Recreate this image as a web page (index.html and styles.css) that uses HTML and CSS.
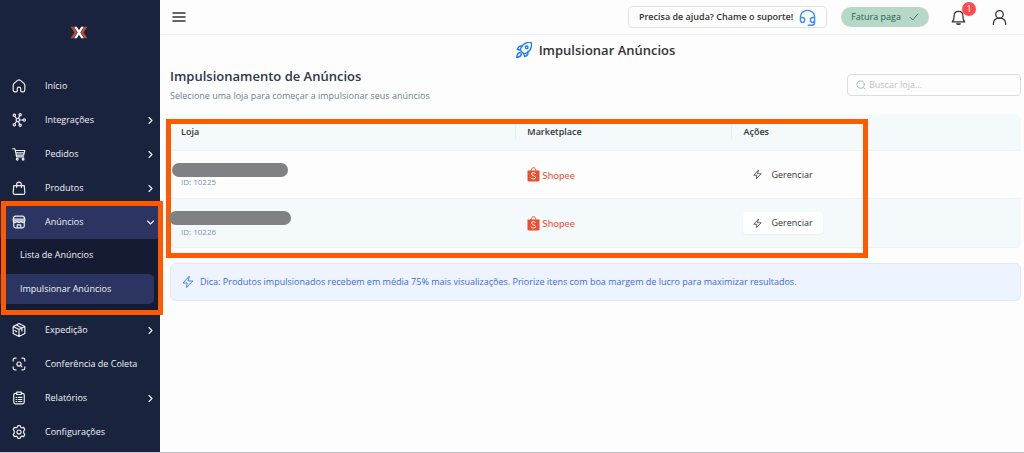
FILE: index.html
```html
<!DOCTYPE html>
<html lang="pt-BR">
<head>
    <meta charset="UTF-8">
    <meta name="viewport" content="width=device-width, initial-scale=1.0">
    <title>Impulsionar Anúncios</title>
    <link rel="stylesheet" href="styles.css">
</head>
<body>
    <!-- Shared icons -->
    <svg class="sprite" aria-hidden="true">
        <symbol id="chevron" viewBox="0 0 24 24"><path d="m8 4 8 8-8 8"/></symbol>
        <symbol id="zap" viewBox="0 0 24 24"><path d="M14 1 2 14h8l-1 9 13-13h-9z"/></symbol>
        <symbol id="shopee" viewBox="0 0 26 30">
            <path d="M8 8c0-9 10-9 10 0" fill="none" stroke="#ee4d2d" stroke-width="2"/>
            <path d="M1 7h24v20q0 2-3 2H4q-3 0-3-2z" fill="#ee4d2d" stroke="none"/>
            <path d="M17 13c-3-3-8-2-8 1 0 4 8 3 8 7 0 4-6 4-9 1" fill="none" stroke="#fff" stroke-width="2"/>
        </symbol>
    </svg>

    <div class="layout">
        <aside class="sidebar">
            <a href="#" class="logo" aria-label="Página inicial">
                <svg viewBox="0 0 54 40">
                    <path d="M1 2h9l12 18-12 18H1l12-18z" fill="#b9502c"/>
                    <path d="M53 2h-9L32 20l12 18h9L41 20z" fill="#b9502c"/>
                    <path d="M12 2h8l7 11 7-11h8L31 20l11 18h-8l-7-11-7 11h-8l11-18z" fill="#fff"/>
                </svg>
            </a>

            <nav class="menu">
                <a href="#" class="menu-item">
                    <svg class="icon" viewBox="0 0 24 24"><path d="M2 11q0-2 2-4l6-5q2-1 4 0l6 5q2 2 2 4v8q0 3-3 3h-2q-2 0-2-2v-3q0-3-3-3t-3 3v3q0 2-2 2H5q-3 0-3-3z"/></svg>
                    <span>Início</span>
                </a>
                <a href="#" class="menu-item">
                    <svg class="icon" viewBox="0 0 24 24"><circle cx="10" cy="12" r="3"/><circle cx="4" cy="4" r="2"/><circle cx="14" cy="3" r="2"/><circle cx="21" cy="12" r="2"/><circle cx="14" cy="21" r="2"/><circle cx="4" cy="20" r="2"/><path d="m5 6 3 4M13 5l-2 4M13 12h6M11 15l2 4M8 14l-3 4"/></svg>
                    <span>Integrações</span>
                    <svg class="arrow"><use href="#chevron"/></svg>
                </a>
                <a href="#" class="menu-item">
                    <svg class="icon" viewBox="0 0 24 24"><path d="M1 3h4l3 14h12M6 6h16l-2 8H7M7 10h14"/><circle cx="9" cy="21" r="1.5"/><circle cx="19" cy="21" r="1.5"/></svg>
                    <span>Pedidos</span>
                    <svg class="arrow"><use href="#chevron"/></svg>
                </a>
                <a href="#" class="menu-item">
                    <svg class="icon" viewBox="0 0 24 24"><path d="M3 8h18l1 12q0 3-3 3H5q-3 0-3-3zM8 11V6q0-4 4-4t4 4v5"/></svg>
                    <span>Produtos</span>
                    <svg class="arrow"><use href="#chevron"/></svg>
                </a>
                <div class="menu-group">
                    <a href="#" class="menu-item open">
                        <svg class="icon" viewBox="0 0 24 24"><path d="M6 2h12q3 0 4 5v3H2V7q1-5 4-5zM2 7h20M2 10q0 3 3 3t3-3q1 3 4 3t4-3q0 3 3 3t3-3M3 13v6q0 3 3 3h12q3 0 3-3v-6M9 22v-5h6v5"/></svg>
                        <span>Anúncios</span>
                        <svg class="arrow"><use href="#chevron"/></svg>
                    </a>
                    <div class="submenu">
                        <a href="#">Lista de Anúncios</a>
                        <a href="#" class="active">Impulsionar Anúncios</a>
                    </div>
                </div>
                <a href="#" class="menu-item">
                    <svg class="icon" viewBox="0 0 24 24"><path d="m12 1 10 5v12l-10 5-10-5V6zM2 6l10 5 10-5M12 11v12M7 3.500l10 5v5M5 13l3 2"/></svg>
                    <span>Expedição</span>
                    <svg class="arrow"><use href="#chevron"/></svg>
                </a>
                <a href="#" class="menu-item">
                    <svg class="icon" viewBox="0 0 24 24"><path d="M2 7V5q0-3 3-3h2M17 2h2q3 0 3 3v2M22 17v2q0 3-3 3h-2M7 22H5q-3 0-3-3v-2M14.500 14.500 17 17"/><circle cx="12" cy="12" r="3.500"/></svg>
                    <span>Conferência de Coleta</span>
                </a>
                <a href="#" class="menu-item">
                    <svg class="icon" viewBox="0 0 24 24"><path d="M8 4H6Q3 4 3 7v12q0 3 3 3h12q3 0 3-3V7q0-3-3-3h-2M8 2h8v4H8zM7 11h1M11 11h6M7 14.500h1M11 14.500h6M7 18h1M11 18h6"/></svg>
                    <span>Relatórios</span>
                    <svg class="arrow"><use href="#chevron"/></svg>
                </a>
                <a href="#" class="menu-item">
                    <svg class="icon" viewBox="0 0 24 24"><path d="M10 1h4l1 3 2 1 3-1 2 4-2 2v4l2 2-2 4-3-1-2 1-1 3h-4l-1-3-2-1-3 1-2-4 2-2v-4L2 8l2-4 3 1 2-1z"/><circle cx="12" cy="12" r="3.500"/></svg>
                    <span>Configurações</span>
                </a>
            </nav>
        </aside>

        <div class="content">
            <header class="topbar">
                <button class="hamburger" aria-label="Menu">
                    <svg viewBox="0 0 14 12"><path d="M1 2h12M1 6h12M1 10h12"/></svg>
                </button>
                <button class="support">
                    Precisa de ajuda? Chame o suporte!
                    <svg viewBox="0 0 24 24"><path d="M2 15v-4a10 9 0 0 1 20 0v8q0 4-4 4h-5M2 12h2q4 0 4 3v1q0 3-3 3t-3-3zM22 12h-2q-4 0-4 3v1q0 3 3 3t3-3z"/></svg>
                </button>
                <button class="invoice">
                    Fatura paga
                    <svg viewBox="0 0 24 24"><path d="m3 13 6 6L21 5"/></svg>
                </button>
                <button class="bell" aria-label="Notificações">
                    <svg viewBox="0 0 24 24"><path d="M2 19q3-3 3-10c0-9 14-9 14 0q0 7 3 10zM9 22h6M11 23h2"/></svg>
                    <span class="badge">1</span>
                </button>
                <button class="user" aria-label="Usuário">
                    <svg viewBox="0 0 24 24"><circle cx="12" cy="7" r="6"/><path d="M2 23q0-10 10-10t10 10"/></svg>
                </button>
            </header>

            <main>
                <h1 class="page-title">
                    <svg viewBox="0 0 24 24"><path d="M9 15l-3-3q3-8 8-10 4-2 9-1 1 5-1 9-2 5-10 8zM6 12l-4-1q2-6 8-5M12 18l1 4q6-2 5-8M5 16q-3 1-4 7 6-1 7-4 0-3-3-3z"/><circle cx="16" cy="8" r="2"/></svg>
                    Impulsionar Anúncios
                </h1>

                <div class="section-header">
                    <div>
                        <h2>Impulsionamento de Anúncios</h2>
                        <p>Selecione uma loja para começar a impulsionar seus anúncios</p>
                    </div>
                    <label class="search">
                        <svg viewBox="0 0 24 24"><circle cx="11" cy="11" r="9"/><path d="m18 18 4 4"/></svg>
                        <input type="text" placeholder="Buscar loja..." aria-label="Buscar loja">
                    </label>
                </div>

                <div class="table-card">
                    <table>
                        <thead>
                            <tr>
                                <th class="col-store">Loja</th>
                                <th class="col-market">Marketplace</th>
                                <th>Ações</th>
                            </tr>
                        </thead>
                        <tbody>
                            <tr>
                                <td><span class="hidden-name"></span><span class="store-id">ID: 10225</span></td>
                                <td><span class="shopee"><svg><use href="#shopee"/></svg>Shopee</span></td>
                                <td><button class="manage"><svg><use href="#zap"/></svg>Gerenciar</button></td>
                            </tr>
                            <tr class="hover">
                                <td><span class="hidden-name wide"></span><span class="store-id">ID: 10226</span></td>
                                <td><span class="shopee"><svg><use href="#shopee"/></svg>Shopee</span></td>
                                <td><button class="manage"><svg><use href="#zap"/></svg>Gerenciar</button></td>
                            </tr>
                        </tbody>
                    </table>
                </div>

                <div class="tip">
                    <svg><use href="#zap"/></svg>
                    <span>Dica: Produtos impulsionados recebem em média 75% mais visualizações. Priorize itens com boa margem de lucro para maximizar resultados.</span>
                </div>
            </main>
        </div>
    </div>
</body>
</html>
```
FILE: styles.css
```css
*,
*::after {
    box-sizing: border-box;
}

body {
    margin: 0;
    font-family: 'Open Sans', 'Noto Sans', sans-serif;
    font-size: 9px;
    line-height: 12px;
    color: #333;
    background-color: #fdfdfd;
}

a {
    color: inherit;
    text-decoration: none;
}

button {
    font: inherit;
    color: inherit;
    background: none;
    border: none;
    padding: 0;
}

svg {
    flex-shrink: 0;
    fill: none;
    stroke: currentColor;
    stroke-width: 2;
    stroke-linecap: round;
    stroke-linejoin: round;
}

.sprite {
    display: none;
}

.layout {
    display: flex;
    min-height: 100vh;
    border-bottom: 1px solid #c3c3c9;
}

/* Sidebar */
.sidebar {
    width: 160px;
    flex-shrink: 0;
    background-color: #1a233d;
    color: #f0f1f5;
}

.logo {
    display: flex;
    justify-content: center;
    padding: 26px 3px 0 0;
    height: 69px;
}

.logo svg {
    width: 18px;
    height: 13px;
    stroke: none;
}

.menu-item {
    display: flex;
    align-items: center;
    height: 34px;
    padding: 0 5px 0 12px;
}

.menu-item .icon {
    width: 14px;
    height: 14px;
    margin-right: 19px;
}

.menu-item .arrow {
    width: 9px;
    height: 9px;
    margin-left: auto;
    stroke-width: 3;
}

.menu-group {
    position: relative;
    padding-bottom: 2px;
}

.menu-item.open {
    background-color: #2c3561;
    border-radius: 4px;
}

.menu-item.open .arrow {
    transform: rotate(90deg);
}

.submenu {
    display: flex;
    flex-direction: column;
    gap: 4px;
    padding: 1px 6px 7px 0;
    background-color: #151b33;
}

.submenu a {
    padding: 9px 20px;
    border-radius: 0 5px 5px 0;
}

.submenu .active {
    background-color: #2c3561;
}

/* Highlight frames */
.menu-group::after,
.table-card::after {
    content: '';
    position: absolute;
    border: 5px solid #ff5a00;
    pointer-events: none;
}

.menu-group::after {
    inset: -4px -3px -2px 1px;
    z-index: 1;
}

.table-card::after {
    top: 5px;
    bottom: -10px;
    left: -4px;
    width: 82.5%;
}

/* Top bar */
.content {
    flex: 1;
    min-width: 0;
}

.topbar {
    display: flex;
    align-items: center;
    height: 35px;
    padding: 0 17px 0 12px;
    border-bottom: 1px solid #efefef;
}

.hamburger {
    display: flex;
    margin-right: auto;
}

.hamburger svg {
    width: 14px;
    height: 12px;
    stroke-width: 1.5;
}

.support {
    display: flex;
    align-items: center;
    gap: 6px;
    height: 22px;
    padding: 0 10px;
    border: 1px solid #dfe3e6;
    border-radius: 4px;
    font-weight: 600;
}

.support svg {
    width: 17px;
    height: 17px;
    color: #3b8cf5;
}

.invoice {
    display: flex;
    align-items: center;
    gap: 8px;
    height: 20px;
    margin-left: 14px;
    padding: 0 10px;
    border-radius: 10px;
    background-color: #b7d8c9;
    color: #23644c;
}

.invoice svg {
    width: 10px;
    height: 10px;
}

.bell {
    position: relative;
    display: flex;
    margin-left: 22px;
}

.bell svg,
.user svg {
    width: 15px;
    height: 15px;
}

.badge {
    position: absolute;
    top: -8px;
    right: -10px;
    width: 14px;
    height: 14px;
    border-radius: 50%;
    background-color: #ff4d4f;
    color: #fff;
    line-height: 14px;
}

.user {
    display: flex;
    margin-left: 26px;
}

/* Page */
main {
    padding: 5px 3px 0 10px;
}

.page-title {
    display: flex;
    align-items: center;
    justify-content: center;
    gap: 7px;
    margin: 0;
    font-size: 13px;
    line-height: 20px;
    font-weight: 600;
}

.page-title svg {
    width: 16px;
    height: 16px;
    color: #1677ff;
}

.section-header {
    display: flex;
    align-items: center;
    justify-content: space-between;
    margin-bottom: 12px;
}

h2 {
    margin: 7px 0 5px;
    color: #2d3748;
    font-size: 13px;
    line-height: 18px;
    font-weight: 600;
}

p {
    margin: 0;
    color: #718096;
}

.search {
    display: flex;
    align-items: center;
    gap: 3px;
    width: 174px;
    height: 22px;
    margin-top: 7px;
    padding: 0 8px;
    border: 1px solid #d9dde0;
    border-radius: 4px;
}

.search svg {
    width: 10px;
    height: 10px;
    color: #9fb1c8;
}

.search input {
    flex: 1;
    min-width: 0;
    padding: 0;
    border: none;
    outline: none;
    background: none;
    font: inherit;
}

.search input::placeholder {
    color: #bfbfbf;
}

/* Table */
.table-card {
    position: relative;
}

table {
    width: 100%;
    border-spacing: 0;
    table-layout: fixed;
}

.col-store {
    width: 40.7%;
}

.col-market {
    width: 25.4%;
}

th,
td {
    padding: 0 11px;
    border-bottom: 1px solid #eef2f3;
    text-align: left;
}

th {
    height: 37px;
    background-color: #f4f9fc;
    font-weight: 600;
}

th:first-child {
    border-top-left-radius: 6px;
}

th:last-child {
    border-top-right-radius: 6px;
}

/* Column dividers */
.col-store,
.col-market {
    background-image: linear-gradient(#e9eef0, #e9eef0);
    background-size: 1px 16px;
    background-position: right center;
    background-repeat: no-repeat;
}

td {
    height: 48px;
}

.hover td {
    height: 49px;
    background-color: #f4f9fb;
}

.hover td:first-child {
    border-bottom-left-radius: 6px;
}

.hover td:last-child {
    border-bottom-right-radius: 6px;
}

.hidden-name {
    display: block;
    position: relative;
    z-index: 1;
    width: 116px;
    height: 14px;
    margin-left: -9px;
    border-radius: 7px;
    background-color: #808185;
}

.hidden-name.wide {
    width: 122px;
    margin-left: -12px;
}

.store-id {
    display: block;
    color: #8290a3;
    font-size: 8px;
    line-height: 9px;
}

.hover .store-id {
    margin-top: 2px;
}

.shopee {
    display: flex;
    align-items: center;
    gap: 2px;
    color: #ee4d2d;
    font-family: Lato, sans-serif;
    font-size: 10px;
}

.shopee svg {
    width: 13px;
    height: 15px;
}

.manage {
    display: flex;
    align-items: center;
    gap: 9px;
    height: 22px;
    padding: 0 10px;
    border-radius: 4px;
}

.manage svg {
    width: 9px;
    height: 9px;
}

.hover .manage {
    background-color: #fff;
    box-shadow: 0 1px 2px rgba(0, 0, 0, 0.05);
}

/* Tip */
.tip {
    display: flex;
    align-items: center;
    gap: 6px;
    min-height: 38px;
    margin-top: 15px;
    padding: 0 11px;
    border: 1px solid #dbeafe;
    border-radius: 6px;
    background-color: #edf4ff;
    color: #4169d8;
}

.tip svg {
    width: 12px;
    height: 12px;
    color: #3b82f6;
}
```
